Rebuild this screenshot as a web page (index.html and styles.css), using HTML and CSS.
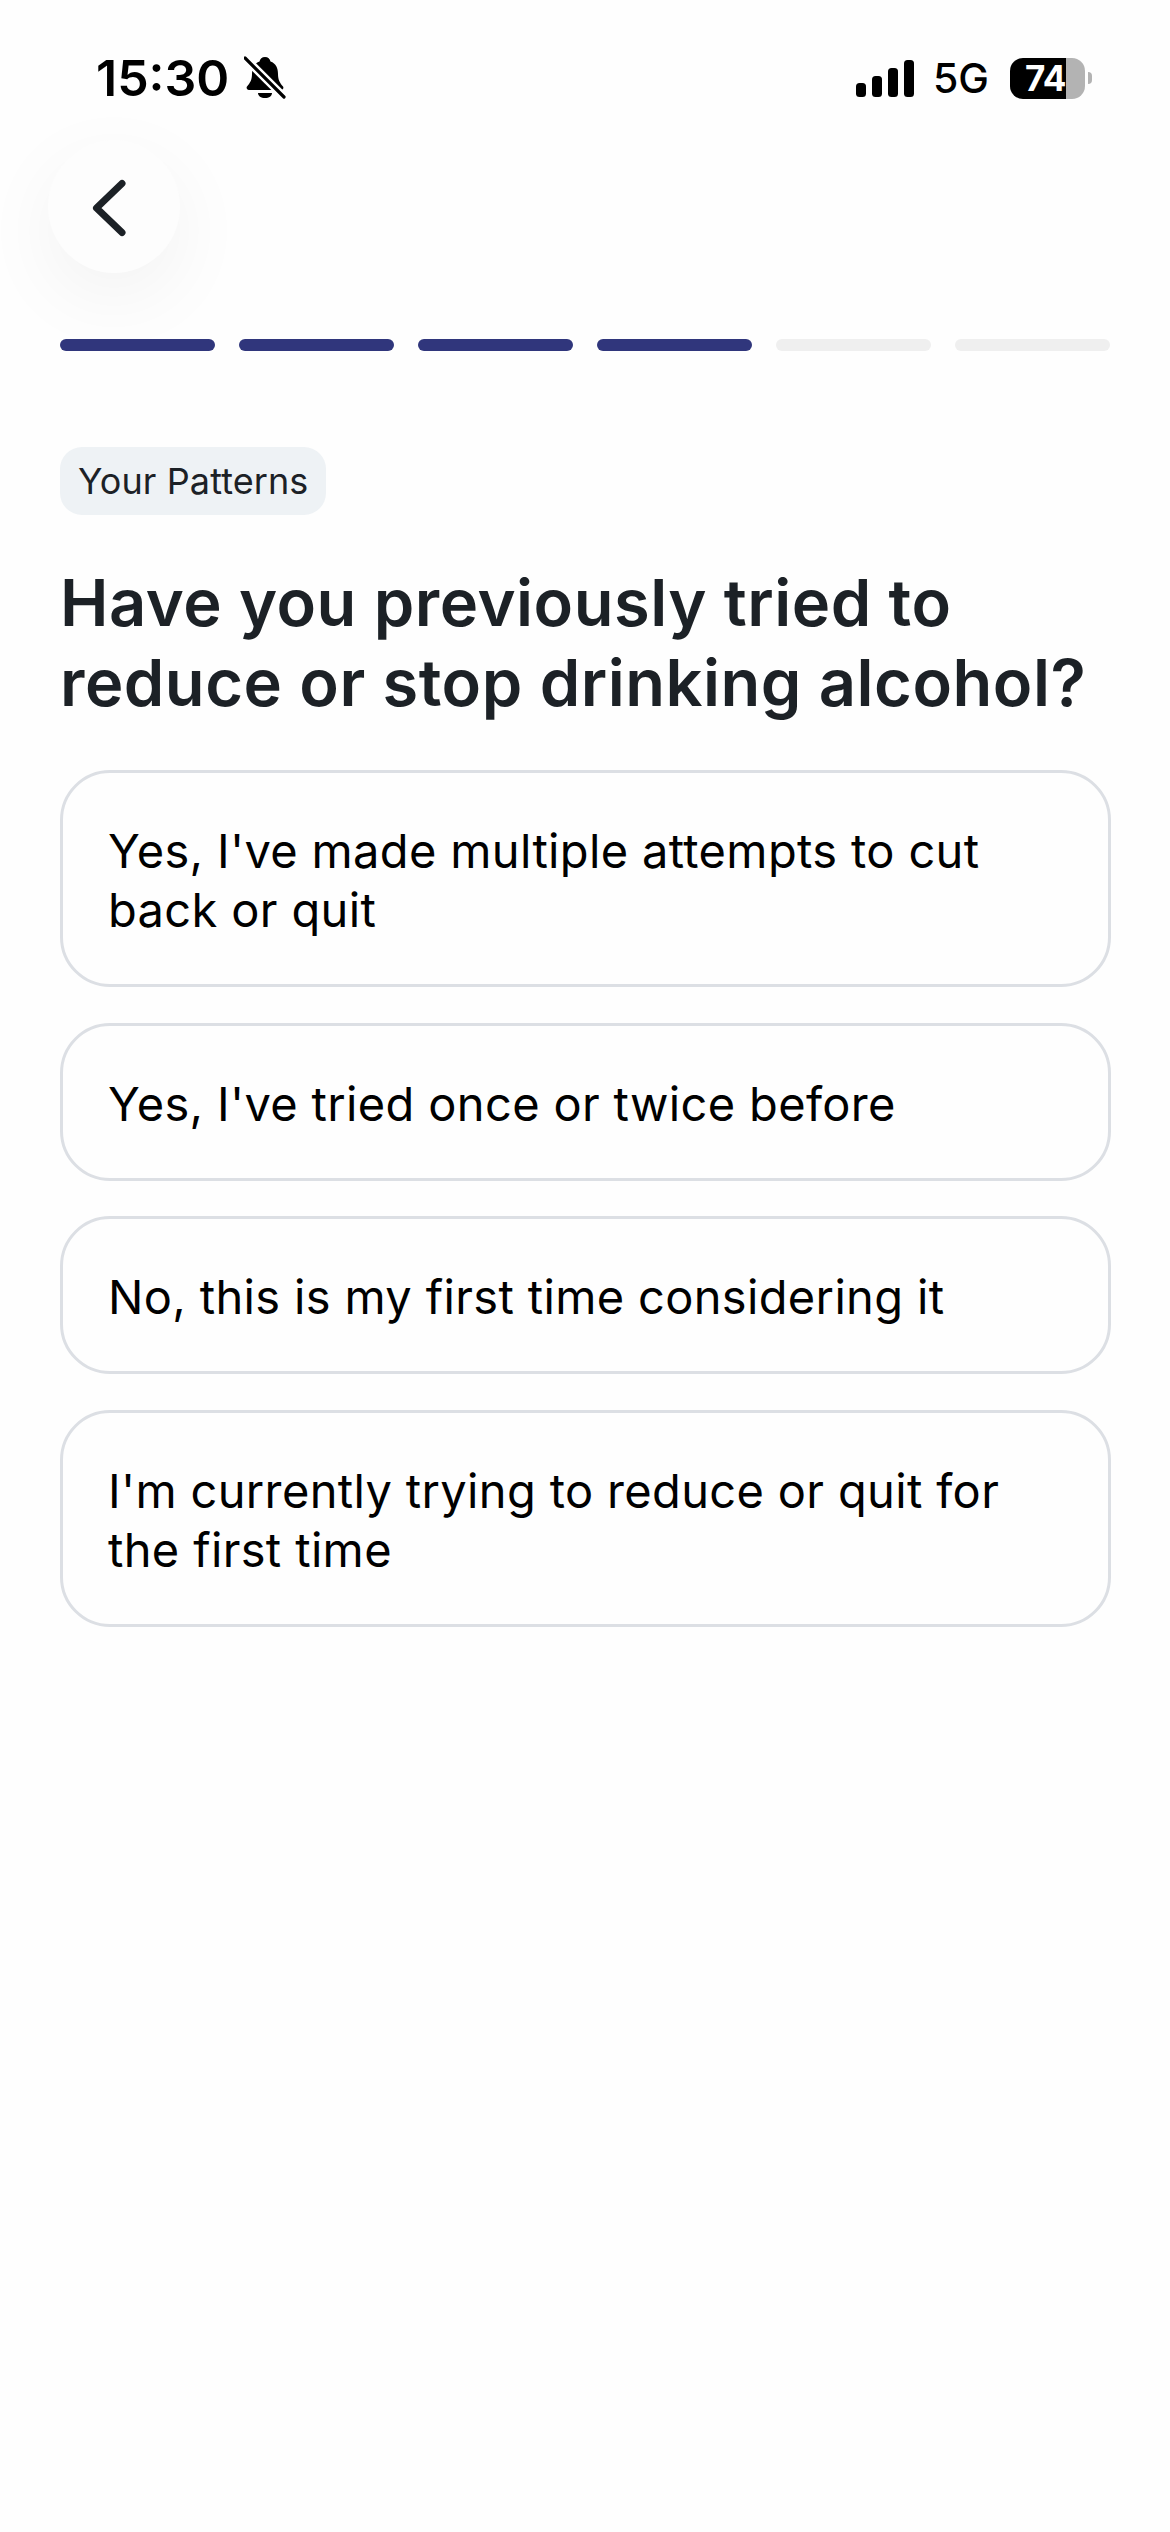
FILE: index.html
```html
<!DOCTYPE html>
<html lang="en">
<head>
<meta charset="utf-8">
<title>Your Patterns</title>
<link rel="stylesheet" href="styles.css">
</head>
<body>
<div class="screen">
  <header class="status">
    <div class="status-left">
      <span class="time">15:30</span>
      <svg class="bell" width="42" height="44" viewBox="0 0 42 44">
        <path d="M21 1c3 0 5 2 5.500 4.500C32 7.500 34 12 34 18c0 6 2 9 5 12.500 1 1.500 0 3.500-2 3.500H5c-2 0-3-2-2-3.500C6 27 8 24 8 18c0-6 2-10.500 7.500-12.500C16 3 18 1 21 1z" fill="#000"/>
        <path d="M14 37h14c0 3-3 5-7 5s-7-2-7-5z" fill="#000"/>
        <path d="M1 2l40 40" stroke="#fff" stroke-width="8"/>
        <path d="M1 2l39 39" stroke="#000" stroke-width="3.200" stroke-linecap="round"/>
      </svg>
    </div>
    <div class="status-right">
      <svg class="signal" width="58" height="37" viewBox="0 0 58 37">
        <rect x="0" y="23" width="10" height="14" rx="3.500"/>
        <rect x="16" y="16" width="10" height="21" rx="3.500"/>
        <rect x="32" y="8" width="10" height="29" rx="3.500"/>
        <rect x="48" y="0" width="10" height="37" rx="3.500"/>
      </svg>
      <span class="network">5G</span>
      <div class="battery">
        <div class="battery-body"><span class="battery-level">74</span></div>
        <div class="battery-cap"></div>
      </div>
    </div>
  </header>

  <div class="nav">
    <button class="back" aria-label="Back">
      <svg width="44" height="64" viewBox="0 0 44 64" fill="none">
        <path d="M34 7.500L8.500 32 34 56.500" stroke="#1c2126" stroke-width="7" stroke-linecap="round" stroke-linejoin="round"/>
      </svg>
    </button>
  </div>

  <div class="progress">
    <span class="seg done"></span>
    <span class="seg done"></span>
    <span class="seg done"></span>
    <span class="seg done"></span>
    <span class="seg"></span>
    <span class="seg"></span>
  </div>

  <main class="content">
    <span class="tag">Your Patterns</span>
    <h1 class="question">Have you previously tried to reduce or stop drinking alcohol?</h1>
    <div class="options">
      <div class="option">Yes, I've made multiple attempts to cut back or quit</div>
      <div class="option">Yes, I've tried once or twice before</div>
      <div class="option">No, this is my first time considering it</div>
      <div class="option">I'm currently trying to reduce or quit for the first time</div>
    </div>
  </main>
</div>
</body>
</html>
```
FILE: styles.css
```css
* { box-sizing: border-box; }
html, body { margin: 0; padding: 0; }
body {
  background: #fefefe;
  font-family: Inter, "Liberation Sans", sans-serif;
  color: #000;
}
.screen { width: 1170px; height: 2532px; overflow: hidden; }

.status {
  height: 140px;
  padding: 55px 0 0 96px;
  display: flex;
  justify-content: space-between;
  align-items: flex-start;
}
.status-left { display: flex; align-items: center; gap: 15px; }
.time { font-size: 50px; font-weight: 600; line-height: 46px; }
.bell { display: block; }
.status-right { display: flex; align-items: center; padding: 2px 78px 0 0; height: 44px; }
.signal { display: block; fill: #000; margin-right: 19px; }
.network { font-size: 41px; font-weight: 500; line-height: 44px; margin-right: 21px; }
.battery { display: flex; align-items: center; }
.battery-body {
  width: 75px;
  height: 41px;
  border-radius: 13px;
  background: linear-gradient(90deg, #000 0, #000 56px, #b3b3b3 56px);
  color: #fff;
  font-size: 35px;
  font-weight: 700;
  line-height: 41px;
  padding-left: 15px;
  letter-spacing: -0.5px;
  overflow: hidden;
}
.battery-cap {
  width: 4px;
  height: 12px;
  margin-left: 3px;
  border-radius: 0 6px 6px 0;
  background: #b3b3b3;
}

.nav { height: 133px; padding-left: 48px; }
.back {
  width: 132px;
  height: 133px;
  border: 0;
  padding: 0 8px 0 0;
  border-radius: 50%;
  background: #fdfdfd;
  box-shadow: 0 24px 80px rgba(0, 0, 0, 0.05);
  display: flex;
  align-items: center;
  justify-content: center;
}
.back svg { display: block; margin-top: 3px; }

.progress {
  margin: 66px 60px 0;
  display: grid;
  grid-template-columns: repeat(6, 1fr);
  gap: 24px;
}
.seg { display: block; height: 12px; border-radius: 6px; background: #efefef; }
.seg.done { background: #30367c; }

.content { padding: 96px 59px 0 60px; }
.tag {
  display: inline-block;
  height: 68px;
  padding: 0 18px;
  border-radius: 22px;
  background: #eef2f5;
  color: #1c2126;
  font-size: 36px;
  line-height: 68px;
  letter-spacing: 0.1px;
}
.question {
  margin: 48px 0 0;
  color: #1c2126;
  font-size: 65px;
  font-weight: 600;
  line-height: 80px;
  letter-spacing: 0.5px;
}
.options { margin-top: 47px; display: flex; flex-direction: column; gap: 35.500px; }
.option {
  border: 3px solid #dcdfe4;
  border-radius: 50px;
  padding: 48px 45px 45px;
  font-size: 47px;
  line-height: 59px;
  letter-spacing: 0.350px;
  background: #fefefe;
}
```
